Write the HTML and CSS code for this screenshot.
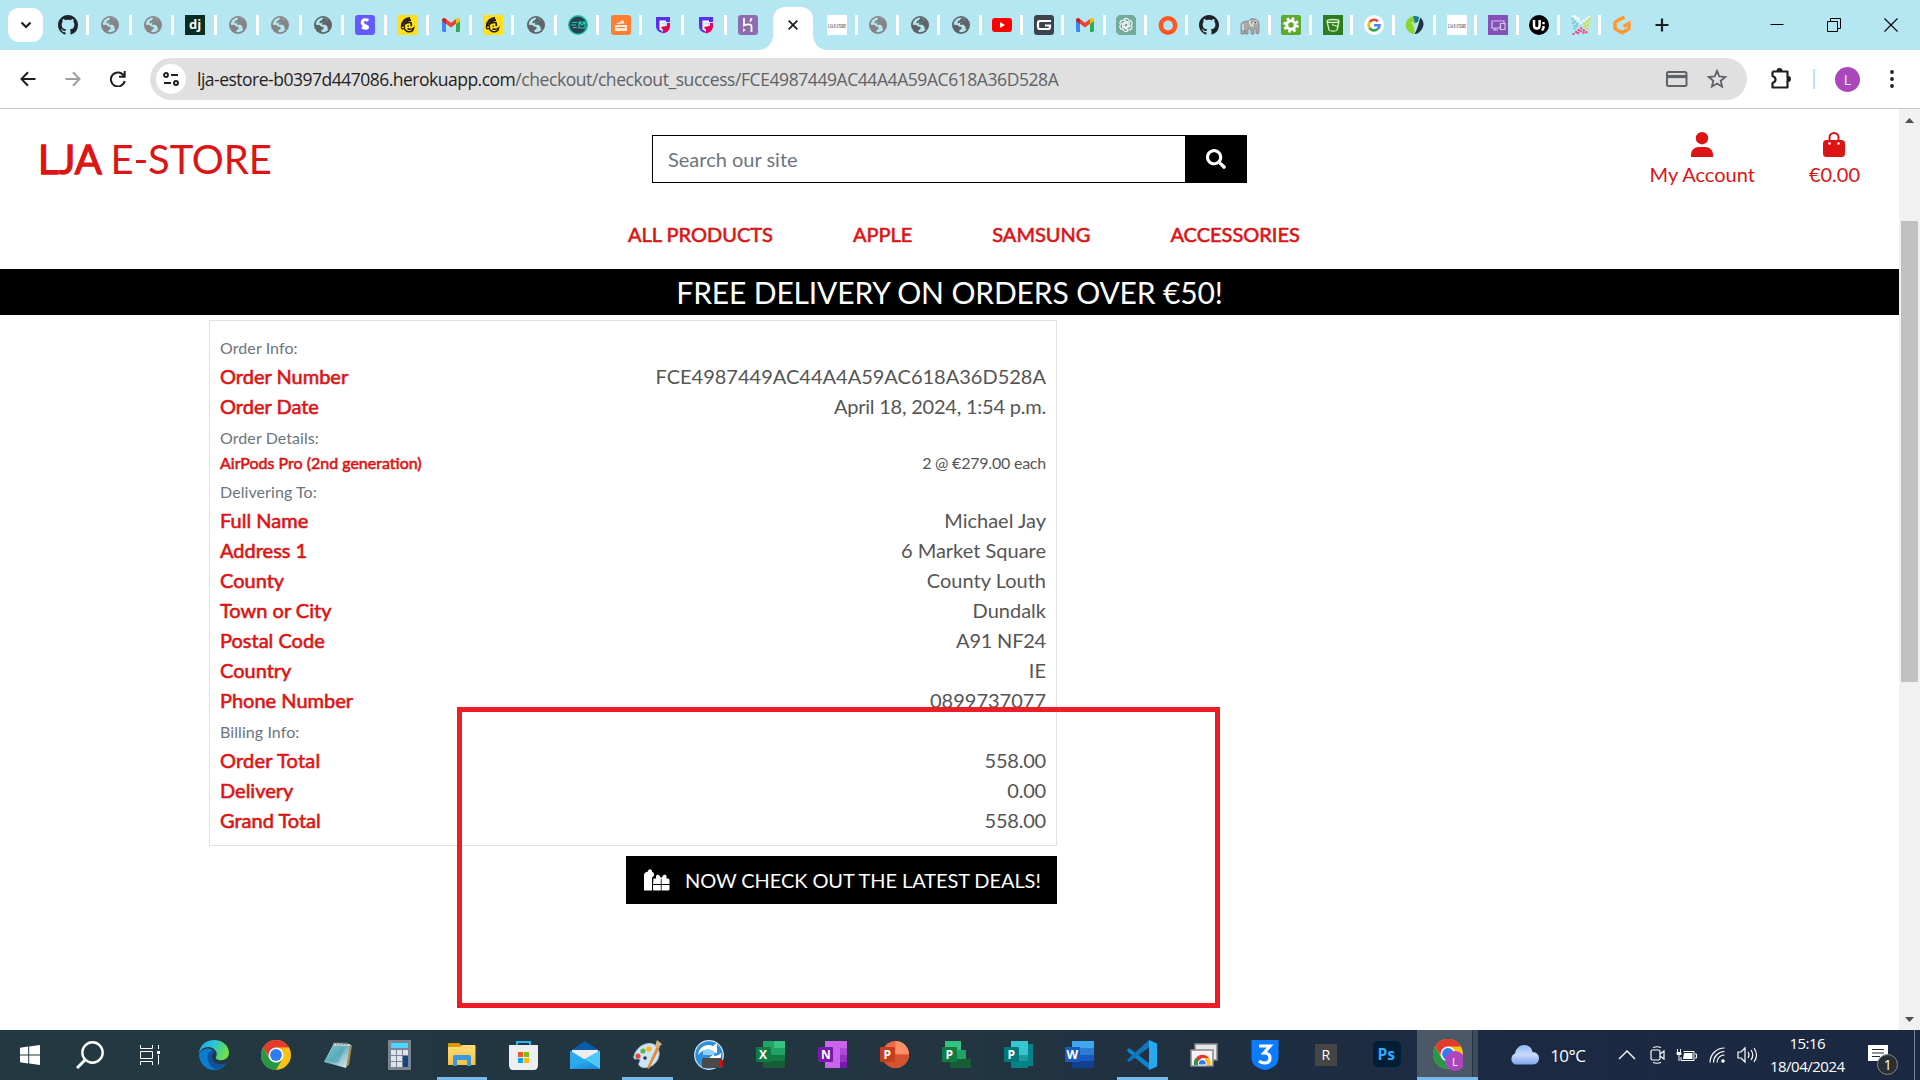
FILE: index.html
```html
<!DOCTYPE html>
<html lang="en">
<head>
<meta charset="utf-8">
<title>LJA E-Store</title>
<link rel="stylesheet" href="styles.css">
</head>
<body>
<svg class="defs" width="0" height="0">
  <defs>
    <linearGradient id="edge-g" x1="0" y1="0" x2="1" y2=".3"><stop offset="0" stop-color="#1fa2e8"/><stop offset=".5" stop-color="#2bc3d8"/><stop offset="1" stop-color="#6be04a"/></linearGradient>
    <linearGradient id="mail-g" x1="0" y1="0" x2="1" y2="1"><stop offset="0" stop-color="#35b8f5"/><stop offset="1" stop-color="#1583d8"/></linearGradient>
    <linearGradient id="cloud-g" x1="0" y1="0" x2="0" y2="1"><stop offset="0" stop-color="#8db8f5"/><stop offset=".5" stop-color="#c7dafa"/><stop offset="1" stop-color="#7fa6ee"/></linearGradient>
    <linearGradient id="note-g" x1="0" y1="0" x2="1" y2="1"><stop offset="0" stop-color="#e8f6f8"/><stop offset=".5" stop-color="#6fb5c3"/><stop offset="1" stop-color="#e8f3f4"/></linearGradient>
    <linearGradient id="folder-g" x1="0" y1="0" x2="0" y2="1"><stop offset="0" stop-color="#ffdc7c"/><stop offset="1" stop-color="#f6c142"/></linearGradient>
  </defs>
  <symbol id="globe" viewBox="0 0 20 20"><circle cx="10" cy="10" r="9" fill="currentColor"/><path d="M9 2.800C5.500 3.300 2.900 6.200 2.800 9.800l3.700.1 2 1.900h2v2.400l-2 .9v1.900c2.600.5 5.400-.5 7.200-2.800l-1.100-.2-.2-2.400-2-1.900H9l-.2-2 2.700-.3.700-1.600 2.500-.3.300-.9C13.400 3.200 11.200 2.500 9 2.800z" fill="#b4e7f2"/><path d="M10.500 2.700 8.800 5.200l-2 .8-.3 2.500 2.800-.9 2.200.1.700-1.800 2.500-.5.700-.8z" fill="currentColor"/></symbol>
  <symbol id="github" viewBox="0 0 16 16"><path fill="#1f2328" d="M8 0C3.580 0 0 3.580 0 8c0 3.540 2.290 6.530 5.470 7.590.4.070.55-.17.550-.38 0-.19-.01-.82-.01-1.490-2.010.37-2.530-.49-2.690-.94-.09-.23-.48-.94-.82-1.130-.28-.15-.68-.52-.01-.53.630-.01 1.080.58 1.230.82.720 1.210 1.870.87 2.330.66.070-.52.280-.87.510-1.070-1.780-.2-3.640-.89-3.640-3.950 0-.87.310-1.590.82-2.150-.08-.2-.36-1.020.080-2.120 0 0 .67-.21 2.200.82.640-.18 1.320-.27 2-.27s1.360.09 2 .27c1.530-1.040 2.200-.82 2.200-.82.440 1.100.160 1.920.080 2.120.51.560.82 1.270.82 2.150 0 3.070-1.870 3.750-3.650 3.950.29.250.54.730.54 1.480 0 1.070-.01 1.930-.01 2.200 0 .21.150.46.55.38A8.010 8.010 0 0 0 16 8c0-4.420-3.580-8-8-8z"/></symbol>
  <symbol id="gmail" viewBox="0 0 20 20"><path fill="#4285f4" d="M1 5.500v10.300c0 .7.500 1.200 1.200 1.200H5V8.500z"/><path fill="#34a853" d="M15 8.500V17h2.800c.7 0 1.200-.5 1.200-1.200V5.500z"/><path fill="#ea4335" d="M5 8.800V3.900l5 3.800 5-3.800v4.900l-5 3.800z"/><path fill="#c5221f" d="M1 5v1l4 3V3.900l-.9-.6C2.800 2.400 1 3.300 1 5z"/><path fill="#fbbc04" d="M15 3.900V9l4-3V5c0-1.700-1.800-2.600-3.100-1.700z"/></symbol>
  <symbol id="chimp" viewBox="0 0 20 20"><rect width="20" height="20" fill="#ffe01b"/><g fill="none" stroke="#241c15"><path d="M4 11.500C4 6.500 8 3 12 3.200" stroke-width="2.400"/><path d="M6 10.500C7 7.500 9.500 5 13 5" stroke-width="2"/><path d="M8 8.500c1.500-1.200 3-1.500 5-.8l.5 3" stroke-width="1.600"/><circle cx="5" cy="12.300" r="1.600" stroke-width="1.300"/><path d="M6.500 13.800c1 3 5 4.200 8.300 1.500l.7-2.300c-2 1.500-4 1.700-6 .8" stroke-width="1.500"/></g><path d="M9.500 10.500h1.500v1.200H9.500zM12.500 10h1.400v1.300h-1.400z" fill="#241c15"/></symbol>
  <symbol id="lja" viewBox="0 0 20 20"><rect width="20" height="20" fill="#fff"/><text x="1" y="12.500" font-family="Liberation Serif, serif" font-size="7" textLength="18" lengthAdjust="spacingAndGlyphs" fill="#111">LJA E-STORE</text></symbol>
  <symbol id="figma" viewBox="0 0 20 20"><path fill="#5a2ff0" d="M3 2h14v5H8v8.500l3 2.500C6 18 3 15 3 11z"/><path fill="#e6005c" d="M17 2v9c0 4-2.500 6.500-7 7.500V14H8v-3h6V8h3z"/><path d="M7.500 15V6.500h5.500M8 10.500h4" stroke="#fff" stroke-width="2" fill="none"/></symbol>
  <symbol id="chrome" viewBox="0 0 30 30"><circle cx="15" cy="15" r="15" fill="#fbc116"/><path fill="#e33b2e" d="M2 7.500A15 15 0 0 1 28 7.500H15L9 18.500z"/><path fill="#279847" d="M2 7.500A15 15 0 0 0 15 30l6.500-11.300L15 22.500l-6.500-3.800z"/><circle cx="15" cy="15" r="7.500" fill="#fff"/><circle cx="15" cy="15" r="5.900" fill="#2f7bf0"/></symbol>
</svg>

<div class="screen">
  <div class="tabstrip">
    <button class="tab-search"><svg width="12" height="8" viewBox="0 0 12 8"><path d="m1.500 1.500 4.500 4.500 4.500-4.500" fill="none" stroke="#1f1f1f" stroke-width="2.200"/></svg></button>
    <div class="tabs tabs-left">
      <span class="tab"><svg><use href="#github"/></svg></span>
      <span class="tab light"><svg><use href="#globe"/></svg></span>
      <span class="tab light"><svg><use href="#globe"/></svg></span>
      <span class="tab"><svg viewBox="0 0 20 20"><rect width="20" height="20" fill="#092e20"/><text x="4" y="14" class="glyph" font-size="13">dj</text></svg></span>
      <span class="tab light"><svg><use href="#globe"/></svg></span>
      <span class="tab light"><svg><use href="#globe"/></svg></span>
      <span class="tab dark"><svg><use href="#globe"/></svg></span>
      <span class="tab"><svg viewBox="0 0 20 20"><rect width="20" height="20" rx="3" fill="#635bff"/><path d="M13.500 5.200C9.500 3.800 7.200 5.200 7.200 7.600c0 3.400 5.300 2.700 5.300 4.500 0 1.500-2.600 1.500-5.600.1" fill="none" stroke="#fff" stroke-width="3"/></svg></span>
      <span class="tab"><svg><use href="#chimp"/></svg></span>
      <span class="tab"><svg><use href="#gmail"/></svg></span>
      <span class="tab"><svg><use href="#chimp"/></svg></span>
      <span class="tab dark"><svg><use href="#globe"/></svg></span>
      <span class="tab"><svg viewBox="0 0 20 20"><circle cx="10" cy="10" r="9.300" fill="#2c3e57" stroke="#16c79a" stroke-width="1.400"/><path d="M4 7.500h5M3 10h5M5 12.500h4M11 7h6v6h-6zl3 3 3-3" fill="none" stroke="#1fd4a4" stroke-width="1.200"/></svg></span>
      <span class="tab"><svg viewBox="0 0 20 20"><rect width="20" height="20" rx="3" fill="#ff7f32"/><path d="M4 10h12v6H4zM5 9l7-4 1.500 3.500z" fill="#ffe9da"/><path d="M6 12.500h8" stroke="#ff7f32"/></svg></span>
      <span class="tab"><svg><use href="#figma"/></svg></span>
      <span class="tab"><svg><use href="#figma"/></svg></span>
      <span class="tab last"><svg viewBox="0 0 20 20"><rect width="20" height="20" rx="3" fill="#8f6bb0"/><path d="M6 3v7.500c3-1.500 7.500-2 7.500 1V17M13.500 3c0 1.500-.5 2.500-1.500 3.500" fill="none" stroke="#fff" stroke-width="1.800"/><path d="m5.200 13 2.300 2-2.300 2z" fill="#fff"/></svg></span>
    </div>
    <div class="tab-active"><svg width="10" height="10" viewBox="0 0 10 10"><path d="m.7.7 8.600 8.600M9.300.7.700 9.300" stroke="#1f1f1f" stroke-width="1.800"/></svg></div>
    <div class="tabs tabs-right">
      <span class="tab"><svg><use href="#lja"/></svg></span>
      <span class="tab light"><svg><use href="#globe"/></svg></span>
      <span class="tab dark"><svg><use href="#globe"/></svg></span>
      <span class="tab dark"><svg><use href="#globe"/></svg></span>
      <span class="tab"><svg viewBox="0 0 20 20"><rect y="3" width="20" height="14" rx="3" fill="#f00"/><path d="M8 7v6l5-3z" fill="#fff"/></svg></span>
      <span class="tab"><svg viewBox="0 0 20 20"><rect width="20" height="20" rx="3" fill="#3b434d"/><path d="M17 6H6Q4 6 4 8v4q0 2 2 2h8q2 0 2-2v-1.500h-5" fill="none" stroke="#fff" stroke-width="2.200"/></svg></span>
      <span class="tab"><svg><use href="#gmail"/></svg></span>
      <span class="tab"><svg viewBox="0 0 20 20"><path d="M3 0h14l3 3v17H3l-3-3V3z" fill="#74aa9c"/><g fill="none" stroke="#fff" stroke-width="1.100"><path id="petal" d="M8 4.200c2-1.600 5-.5 5.200 2v4.200L10 12.300"/><use href="#petal" transform="rotate(60 10 10)"/><use href="#petal" transform="rotate(120 10 10)"/><use href="#petal" transform="rotate(180 10 10)"/><use href="#petal" transform="rotate(240 10 10)"/><use href="#petal" transform="rotate(300 10 10)"/></g></svg></span>
      <span class="tab"><svg viewBox="0 0 20 20"><circle cx="10" cy="10.500" r="7.200" fill="none" stroke="#ff5722" stroke-width="4.400"/></svg></span>
      <span class="tab"><svg><use href="#github"/></svg></span>
      <span class="tab"><svg viewBox="0 0 20 20"><path d="M1 19V10c0-3 3-4 8-4 0-2 3-3 5-2 4 0 5 3 5 6v8c-1 1.500-2.500 1-3 0v-5l-2 1v5h-3v-5H8v5H5v-4l-1 4z" fill="#aaa" stroke="#777" stroke-width=".7"/><path d="M10 5c-1 3 0 5 2 6l2-4M3 9v6M16 5v4" fill="none" stroke="#eee" stroke-width="1.200"/><circle cx="15.500" cy="7.500" r=".8" fill="#333"/></svg></span>
      <span class="tab"><svg viewBox="0 0 20 20"><rect width="20" height="20" rx="2" fill="#5fa92f"/><circle cx="10" cy="10" r="6.500" fill="none" stroke="#fff" stroke-width="2.600" stroke-dasharray="2.550"/><circle cx="10" cy="10" r="4.300" fill="none" stroke="#fff" stroke-width="3"/></svg></span>
      <span class="tab"><svg viewBox="0 0 20 20"><rect width="20" height="20" fill="#2e7d1e"/><path d="M4 6c0-2 12-2 12 0s-12 2-12 0l2 9c1 1.500 7 1.500 8 0l2-9M9 9.500l7 2.500" fill="none" stroke="#d8f0c8" stroke-width="1.300"/></svg></span>
      <span class="tab"><svg viewBox="0 0 20 20"><circle cx="10" cy="10" r="10" fill="#fff"/><g fill="none" stroke-width="2.600"><path d="M5.700 6.900a5.400 5.400 0 0 1 8.200-.6" stroke="#ea4335"/><path d="M5.500 13a5.600 5.600 0 0 1 .2-6.100" stroke="#fbbc04"/><path d="M13.800 13.900A5.500 5.500 0 0 1 5.500 13" stroke="#34a853"/><path d="M10 10.200h5.500c0 1.500-.6 2.900-1.700 3.700" stroke="#4285f4"/></g></svg></span>
      <span class="tab"><svg viewBox="0 0 20 20"><path d="M8 1.200A9 9 0 0 0 9 19c1-3 1-7-3-12 2 0 4 2 5 4z" fill="#8bd62b"/><path d="M15 2.600c4 2.500 5.500 9-.5 14.400-1.500 1.500-3 2-5 2 2-3 4-8 5.500-16.400z" fill="#1f3340"/><path d="M8 1.200c2-.5 4-.2 6 .8l-1 5-3 1z" fill="#197a8c"/></svg></span>
      <span class="tab"><svg><use href="#lja"/></svg></span>
      <span class="tab"><svg viewBox="0 0 20 20"><rect width="20" height="20" fill="#8550b8"/><path d="M4 13V6h12v2M3 13h9v-2M12.500 8.500h4.500v6h-4.500zM5 15h5M7 13v2" fill="none" stroke="#d8c4ee" stroke-width="1.200"/></svg></span>
      <span class="tab"><svg viewBox="0 0 20 20"><circle cx="10" cy="10" r="10" fill="#000"/><path d="M5 5v5.500q0 3 2.800 3t2.800-3V5" fill="none" stroke="#fff" stroke-width="2.500"/><path d="M14.500 7v2.300M14.500 11v2l-1.500 2.500" fill="none" stroke="#fff" stroke-width="2.400"/></svg></span>
      <span class="tab"><svg viewBox="0 0 20 20" fill="none" stroke-linecap="round" stroke-width="2.400" stroke-dasharray="0 3.300"><path d="m2 1.500 8 6 8-6M4.500 1.500l5.500 3" stroke="#fff"/><path d="m1.500 4 5.500 6-5.500 6M2 8l2 4" stroke="#7ccbc8"/><path d="m18.500 4-5.500 6 5.500 6M17 7v5" stroke="#d8e021"/><path d="m2.500 19 7.500-6 7.500 6M7 18l3-2 3 2" stroke="#ed4b82"/></svg></span>
      <span class="tab last"><svg viewBox="0 0 20 20"><path d="M12.500 2 4.200 6.300Q3 7 3 8.500v4q0 1.300 1.200 2l4.600 2.600q1.200.7 2.400 0l4.600-2.600q1.200-.7 1.200-2V8.500l-5.500 3" fill="none" stroke="#ff9a33" stroke-width="3.600"/></svg></span>
    </div>
    <svg class="plus" width="14" height="14" viewBox="0 0 14 14"><path d="M7 .5v13M.5 7h13" stroke="#1f1f1f" stroke-width="2.200"/></svg>
    <div class="window-controls">
      <svg width="14" height="14" viewBox="0 0 14 14"><path d="M.5 6.500h13" stroke="#000"/></svg>
      <svg width="14" height="14" viewBox="0 0 14 14"><path d="M.5 3.500h10v10H.5zM3.500 3V.5h10v10H11" fill="none" stroke="#000"/></svg>
      <svg width="14" height="14" viewBox="0 0 14 14"><path d="m.5.5 13 13M13.500.5.500 13.500" stroke="#000" stroke-width="1.100"/></svg>
    </div>
  </div>

  <div class="toolbar">
    <div class="nav-buttons">
      <svg width="16" height="16" viewBox="0 0 16 16"><path d="M15.500 8H2M8 1.300 1.500 8 8 14.700" fill="none" stroke="#1f1f1f" stroke-width="2"/></svg>
      <svg width="16" height="16" viewBox="0 0 16 16"><path d="M.5 8H14M8 1.300 14.500 8 8 14.700" fill="none" stroke="#9e9e9e" stroke-width="2"/></svg>
      <svg width="16" height="16" viewBox="0 0 16 16"><path d="M14 5A7 7 0 1 0 14.700 10M14.700 0v5.700H9" fill="none" stroke="#1f1f1f" stroke-width="2"/></svg>
    </div>
    <div class="address">
      <span class="site-info"><svg width="16" height="14" viewBox="0 0 16 14" fill="none" stroke="#1f1f1f" stroke-width="1.900"><circle cx="3" cy="3" r="2"/><path d="M8 3h7M1 11h7"/><circle cx="13" cy="11" r="2"/></svg></span>
      <span class="url"><span class="url-host">lja-estore-b0397d447086.herokuapp.com</span><span class="url-path">/checkout/checkout_success/FCE4987449AC44A4A59AC618A36D528A</span></span>
      <svg class="card-icon" width="22" height="16" viewBox="0 0 22 16"><rect x="1" y="1" width="19.500" height="14" rx="1.500" fill="none" stroke="#5f6368" stroke-width="2"/><path d="M1 5.500h20" stroke="#5f6368" stroke-width="3.200"/></svg>
      <svg class="star-icon" width="20" height="20" viewBox="0 0 20 20"><path d="m10 1.800 2.300 5.600 6 .5-4.600 3.900 1.400 5.900-5.100-3.100-5.100 3.100 1.400-5.900L1.700 7.900l6-.5z" fill="none" stroke="#5f6368" stroke-width="1.800"/></svg>
    </div>
    <svg class="puzzle" width="22" height="22" viewBox="0 0 22 22"><path d="M2.500 3.500h15v5.500M17.500 13v6.500h-15v-4.500q3-1 3-3.500t-3-3.500V3.500" fill="none" stroke="#1f1f1f" stroke-width="2.200" stroke-linejoin="round"/><path d="M6.500 3a3 3 0 0 1 6 0zM18 8a3 3 0 0 1 0 6z" fill="#1f1f1f"/><path d="M17.500 8.500v5" stroke="#1f1f1f" stroke-width="2"/></svg>
    <span class="divider"></span>
    <span class="avatar">L</span>
    <svg class="kebab" width="4" height="18" viewBox="0 0 4 18" fill="#1f1f1f"><circle cx="2" cy="2" r="1.900"/><circle cx="2" cy="9" r="1.900"/><circle cx="2" cy="16" r="1.900"/></svg>
  </div>

  <div class="viewport">
    <main class="page">
      <header class="header">
        <a class="logo"><b>LJA</b> E-STORE</a>
        <form class="search">
          <span class="search-input">Search our site</span>
          <span class="search-btn"><svg width="20" height="20" viewBox="0 0 512 512"><path fill="#fff" d="M505 442.700 405.300 343c-4.500-4.500-10.600-7-17-7H372c27.600-35.300 44-79.700 44-128C416 93.100 322.900 0 208 0S0 93.100 0 208s93.100 208 208 208c48.300 0 92.700-16.400 128-44v16.300c0 6.400 2.500 12.500 7 17l99.700 99.700c9.400 9.400 24.600 9.400 33.900 0l28.300-28.300c9.400-9.400 9.400-24.600.1-34zM208 336c-70.700 0-128-57.200-128-128 0-70.700 57.200-128 128-128 70.700 0 128 57.200 128 128 0 70.700-57.200 128-128 128z"/></svg></span>
        </form>
        <div class="account">
          <a class="account-link"><svg width="22" height="25" viewBox="0 0 22 25" fill="#dc1414"><circle cx="11" cy="6.200" r="6.200"/><path d="M0 25v-2c0-5 3.500-8 8-8h6c4.500 0 8 3 8 8v2z"/></svg><span>My Account</span></a>
          <a class="account-link"><svg width="22" height="25" viewBox="0 0 22 25"><path d="M6.500 9V5.500a4.500 4.500 0 0 1 9 0V9" fill="none" stroke="#dc1414" stroke-width="2"/><rect y="8" width="22" height="17" rx="3.500" fill="#dc1414"/><circle cx="6.500" cy="11.500" r="1.300" fill="#fff"/><circle cx="15.500" cy="11.500" r="1.300" fill="#fff"/></svg><span>€0.00</span></a>
        </div>
      </header>
      <nav class="nav"><a>ALL PRODUCTS</a><a>APPLE</a><a>SAMSUNG</a><a>ACCESSORIES</a></nav>
      <div class="banner">FREE DELIVERY ON ORDERS OVER €50!</div>
      <section class="order">
        <div class="card">
          <div class="row"><small>Order Info:</small></div>
          <div class="row"><b>Order Number</b><span>FCE4987449AC44A4A59AC618A36D528A</span></div>
          <div class="row"><b>Order Date</b><span class="tight">April 18, 2024, 1:54 p.m.</span></div>
          <div class="row"><small>Order Details:</small></div>
          <div class="row item"><b>AirPods Pro (2nd generation)</b><span class="tight">2 @ €279.00 each</span></div>
          <div class="row"><small>Delivering To:</small></div>
          <div class="row"><b>Full Name</b><span>Michael Jay</span></div>
          <div class="row"><b>Address 1</b><span>6 Market Square</span></div>
          <div class="row"><b>County</b><span>County Louth</span></div>
          <div class="row"><b>Town or City</b><span>Dundalk</span></div>
          <div class="row"><b>Postal Code</b><span class="tight">A91 NF24</span></div>
          <div class="row"><b>Country</b><span>IE</span></div>
          <div class="row"><b>Phone Number</b><span>0899737077</span></div>
          <div class="row"><small>Billing Info:</small></div>
          <div class="row"><b class="wide">Order Total</b><span class="tight">558.00</span></div>
          <div class="row"><b>Delivery</b><span class="tight">0.00</span></div>
          <div class="row"><b>Grand Total</b><span class="tight">558.00</span></div>
        </div>
        <a class="deals"><svg width="26" height="22" viewBox="0 0 26 22"><path d="M0 21V6q0-2.500 2.500-3L4 2.500V1.500L6 0l2 1.500v1.200l1.500 1q1 1 .5 3L8 8.500v13H1q-1 0-1-.5z" fill="#fff"/><path d="M9.500 9.500h2.500V7.500c0-2 3-2.500 4 0l1.200 1.500 1.300-1.500c1-2.500 4-2 4 0v2h1.500q1.500 0 1.500 1.500v4H17.600V10h-.8v5H9zM9 16h7.800v5.500H10q-1 0-1-1.500zm8.600 0h7.900v4q0 1.500-1.500 1.500h-6.400z" fill="#fff"/></svg><span>NOW CHECK OUT THE LATEST DEALS!</span></a>
      </section>
    </main>
    <div class="scrollbar">
      <svg width="9" height="5" viewBox="0 0 9 5"><path d="M0 5 4.500 0 9 5z" fill="#505050"/></svg>
      <span class="thumb"></span>
      <svg width="9" height="5" viewBox="0 0 9 5"><path d="m0 0 4.500 5L9 0z" fill="#505050"/></svg>
    </div>
    <div class="highlight"></div>
  </div>

  <footer class="taskbar">
    <div class="system">
      <span><svg width="20" height="20" viewBox="0 0 20 20" fill="#fff"><path d="M0 2.700 8.200 1.500v8H0zM9.200 1.400 20 0v9.500H9.200zM0 10.500h8.200v8L0 17.300zM9.200 10.500H20V20L9.200 18.600z"/></svg></span>
      <span><svg width="28" height="28" viewBox="0 0 28 28" fill="none" stroke="#fff"><circle cx="16.500" cy="11.500" r="10.200" stroke-width="2.400"/><path d="M9 19 1 27" stroke-width="3"/></svg></span>
      <span><svg width="20" height="20" viewBox="0 0 20 20" fill="none" stroke="#fff"><path d="M.5 0v3.500h12V0M.5 20v-3.500h12V20M.5 6.500h12v7H.5zM18.500 0v4M18.500 10v9.500"/><path d="M17 7.500h3" stroke-width="3"/></svg></span>
    </div>
    <div class="apps">
      <span class="app"><svg width="30" height="30" viewBox="0 0 30 30"><path d="M0 14C0 22 6 30 15 30c5 0 9-2 12-6-6 2-14 0-14-7 0-3 1-4 2-5C11 6 3 8 0 14z" fill="#0b7dd0"/><path d="M0 13C1 5 7 0 15 0c9 0 15 6 15 13 0 5-5 8-10 7-3-.5-4-2-2.500-4C19 12 15 7 9 7c-4 0-7 2-9 6z" fill="url(#edge-g)"/><path d="M9 14c-2 7 3 15 9 15 5-1 8-4 9.500-6-6 3-14 0-14.500-5-.5-3 .5-5 2.500-6-3-2-5.500-1-6.500 2z" fill="#10509d"/></svg></span>
      <span class="app"><svg width="30" height="30"><use href="#chrome"/></svg></span>
      <span class="app"><svg width="28" height="28" viewBox="0 0 28 28"><path d="m23 3 5 1-3 20-3 2z" fill="#b08a4a"/><path d="m10 2 16 1-4 24L0 21z" fill="url(#note-g)"/><path d="m10 2 16 1v2L9 4z" fill="#c9d5d8"/><path d="m9 5-8 15 13 2 8-17z" fill="#4fa3b5" opacity=".6"/><path d="M10 1v3m3-3v3m3-3v3m3-3v3m3-3v3" stroke="#777"/></svg></span>
      <span class="app"><svg width="23" height="30" viewBox="0 0 23 30"><rect width="23" height="30" rx="1" fill="#7c8692"/><path d="M3 3h17v5H3z" fill="#4cd6fb"/><path d="M3 10h5v5H3zM9 10h5v5H9zM15 10h5v5h-5zM3 16h5v5H3zM9 16h5v5H9zM3 22h5v5H3zM9 22h5v5H9z" fill="#dfe4ea"/><path d="M15 16h5v11h-5z" fill="#124488"/></svg></span>
      <span class="app running"><svg width="28" height="24" viewBox="0 0 28 24"><path d="M0 1q0-1 1-1h10l2 2v6H0z" fill="#d99a05"/><path d="M0 4h12l2-2h12.500q1 0 1 1v19H0z" fill="url(#folder-g)"/><path d="M5 23V14q0-2 2-2h14q2 0 2 2v9h-4v-6H9v6z" fill="#3a96dd"/></svg></span>
      <span class="app"><svg width="29" height="29" viewBox="0 0 29 29"><path d="M8 5V1h13v4" fill="none" stroke="#29b6f0" stroke-width="2"/><path d="M0 4h29v20q0 5-4 5H4q-4 0-4-5z" fill="#eceeef"/><path d="M9 11h5v5H9z" fill="#f35325"/><path d="M15 11h5v5h-5z" fill="#81bc06"/><path d="M9 17h5v5H9z" fill="#05a6f0"/><path d="M15 17h5v5h-5z" fill="#ffba08"/></svg></span>
      <span class="app"><svg width="30" height="28" viewBox="0 0 30 28"><path d="M0 10 15 0l15 10z" fill="#0b5aab"/><path d="M2 9h26v9H2z" fill="#eee"/><path d="M0 9.500 30 28H0z" fill="#2ba8ee"/><path d="M30 9.500V28L14 18.300z" fill="#4cc8fa"/><path d="M30 28H0l15-9.300z" fill="url(#mail-g)"/></svg></span>
      <span class="app running"><svg width="30" height="30" viewBox="0 0 30 30"><path d="M2 16C5 6 14 2 21 4c7 3 8 12 3 18-5 7-15 7-17 3-1-3 3-4 0-6-2-1-6 2-5-3z" fill="#cfe4f2" stroke="#9cc0d8"/><circle cx="6" cy="16" r="2.600" fill="#e2493c"/><circle cx="11" cy="11" r="2.600" fill="#5fb848"/><circle cx="17" cy="9" r="2.800" fill="#f6b62c"/><circle cx="13" cy="18" r="1.800" fill="#273c48"/><path d="m15 28 10-22 3 1-11 22z" fill="#e6892d"/><path d="m23 6 2-6 5 4-4 4z" fill="#d8b17a"/></svg></span>
      <span class="app"><svg width="30" height="30" viewBox="0 0 30 30"><circle cx="15" cy="15" r="14.300" fill="#2f8fdc" stroke="#cfe6f8" stroke-width="1.200"/><path d="M4 15C5 7 12 3 19 6l4-3v10l-9-1 2-2c-5-1-9 1-12 5z" fill="#fff"/><path d="M9 11c4-3 8-2 12 1l-1 3H9z" fill="#8fd0f7"/><path d="M27 13c1 5-2 8-6 9l-6-4 5-4v2c3 0 5-1 7-3z" fill="#fff"/><path d="M8 20q0-2 2-2h18v10H10q-2 0-2-2z" fill="#4a4a4a"/><path d="M25 20h4v7h-4z" fill="#c80f16"/></svg></span>
      <span class="app"><svg width="30" height="28" viewBox="0 0 30 28"><path d="M7 0h22v27H7z" fill="#21a366"/><path d="M18 0h11v7H18z" fill="#33c481"/><path d="M7 14h22v13H7z" fill="#107c41"/><path d="M7 20h22v7H7z" fill="#185c37"/><rect y="6" width="15" height="15" rx="1" fill="#107c41"/><text x="3" y="18" class="glyph" font-size="12">X</text></svg></span>
      <span class="app"><svg width="30" height="28" viewBox="0 0 30 28"><path d="M7 0h22v27H7z" fill="#ca64ea"/><path d="M22 7h7v7h-7z" fill="#ae4bd5"/><path d="M22 14h7v7h-7z" fill="#9332bf"/><path d="M22 21h7v6h-7z" fill="#7719aa"/><rect y="6" width="15" height="15" rx="1" fill="#7719aa"/><text x="3" y="18" class="glyph" font-size="12">N</text></svg></span>
      <span class="app"><svg width="30" height="28" viewBox="0 0 30 28"><circle cx="15.500" cy="13.500" r="13.500" fill="#ed6c47"/><path d="M15.500 0A13.500 13.500 0 0 1 29 13.500H15.500z" fill="#ff8f6b"/><path d="M2 13.500h27a13.500 13.500 0 0 1-27 0z" fill="#d35230"/><rect y="6" width="15" height="15" rx="1" fill="#c43e1c"/><text x="3.500" y="18" class="glyph" font-size="12">P</text></svg></span>
      <span class="app"><svg width="30" height="28" viewBox="0 0 30 28"><path d="M3 0h16v9H3z" fill="#33c481"/><path d="M3 9h21v9H3z" fill="#21a366"/><path d="M8 18h21v9H8z" fill="#185c37"/><rect y="6" width="15" height="15" rx="1" fill="#107c41"/><text x="3.500" y="18" class="glyph" font-size="12">P</text></svg></span>
      <span class="app"><svg width="30" height="28" viewBox="0 0 30 28"><path d="M12 3h17v22H12z" fill="#038387"/><path d="M7 0h17v27H7z" fill="#1a9ba1"/><path d="M7 0h17v14H7z" fill="#37c6d0"/><path d="M7 20h17v7H7z" fill="#038387"/><rect y="6" width="15" height="15" rx="1" fill="#03787c"/><text x="3.500" y="18" class="glyph" font-size="12">P</text></svg></span>
      <span class="app"><svg width="30" height="28" viewBox="0 0 30 28"><path d="M7 0h22v27H7z" fill="#2b7cd3"/><path d="M7 0h22v7H7z" fill="#41a5ee"/><path d="M7 14h22v13H7z" fill="#185abd"/><path d="M7 20h22v7H7z" fill="#103f91"/><rect y="6" width="15" height="15" rx="1" fill="#185abd"/><text x="1.500" y="18" class="glyph" font-size="12">W</text></svg></span>
      <span class="app running"><svg width="30" height="30" viewBox="0 0 30 30"><path d="M0 10l2-2 21 16v6L1 12z" fill="#0a86d1"/><path d="M0 20 22 0l2 6L2 22z" fill="#0f76bc"/><path d="M22 0 30 3.500v23L22 30V0z" fill="#26a8f2"/></svg></span>
      <span class="app late"><svg width="28" height="24" viewBox="0 0 28 24"><path d="M5 1h22v16H5z" fill="#e8e8e8" stroke="#888" stroke-width="1.500"/><path d="M1 7h22v16H1z" fill="#f3f3f3" stroke="#888" stroke-width="1.500"/><path d="M4 22a8 8 0 0 1 2-7 8 8 0 0 1 13 0h-7z" fill="#e33b2e"/><path d="M4 22c-.500-3 .500-5 2-7l4 7z" fill="#279847"/><path d="M19 15c1.500 2 2 4 1.500 7H15V15z" fill="#fbc116"/><path d="M8.500 22a4 4 0 1 1 7.500 0z" fill="#2f7bf0" stroke="#fff"/></svg></span>
      <span class="app late"><svg width="28" height="30" viewBox="0 0 28 30"><path d="M.5 0h27v17q0 8-7 11-4 2-6.500 2t-6.500-2q-7-3-7-11z" fill="#0b7bff"/><path d="M8 6h11l-6 7q6 0 6 5t-5.500 5q-3 0-5.500-2" fill="none" stroke="#fff" stroke-width="3.200"/></svg></span>
      <span class="app late"><svg width="22" height="22" viewBox="0 0 22 22"><rect width="22" height="22" fill="#454545"/><text x="6.500" y="16" font-family="Open Sans, sans-serif" font-size="14" fill="#fff">R</text></svg></span>
      <span class="app late"><svg width="28" height="28" viewBox="0 0 28 28"><rect width="28" height="26" rx="5" fill="#001e36"/><text x="4.500" y="18.500" font-family="Open Sans, sans-serif" font-weight="700" font-size="15.500" fill="#31a8ff">Ps</text></svg></span>
      <span class="app late running current"><svg width="30" height="32" viewBox="0 0 30 32"><use href="#chrome" width="30" height="30"/><circle cx="22" cy="22" r="10" fill="#ab47bc"/><text x="19" y="26.500" font-family="Open Sans, sans-serif" font-size="11" fill="#fff">L</text></svg></span>
    </div>
    <div class="tray">
      <svg class="weather" width="30" height="20" viewBox="0 0 30 20"><path d="M6 19.500a6 6 0 0 1 0-11C7 3 11 0 15 0c5 0 8 3 8.500 7 4 0 6.500 3 6.500 6s-2 6.500-6 6.500z" fill="url(#cloud-g)"/></svg>
      <span class="temp">10°C</span>
      <svg class="chev" width="18" height="10" viewBox="0 0 18 10"><path d="m1 9 8-8 8 8" fill="none" stroke="#fff" stroke-width="1.400"/></svg>
      <svg class="cam" width="15" height="18" viewBox="0 0 15 18" fill="none" stroke="#fff" stroke-width="1.200"><rect x="1" y="4" width="9" height="10" rx="1.500"/><path d="m10 8 4-3v8l-4-3M3 1.500q4-1.500 8 0M3 16.500q4 1.500 8 0"/></svg>
      <svg class="battery" width="21" height="13" viewBox="0 0 21 13"><path d="M7.500 2.500H18v9H5V8M19 5h1.500v4H19" fill="none" stroke="#fff"/><path d="M8 4h8.500v6H7z" fill="#fff"/><path d="M1.500 0v3M4.500 0v3M3 6v6M1 3.500h4v2H1z" fill="#fff" stroke="#fff"/></svg>
      <svg class="wifi" width="17" height="16" viewBox="0 0 17 16" fill="none" stroke="#fff" stroke-width="1.200"><path d="M1 15.500A14.500 14.500 0 0 1 15.500 1M4.500 15.500a11 11 0 0 1 11-11M8 15.500a7.500 7.500 0 0 1 7.500-7.500"/><circle cx="14" cy="14" r="1.200" fill="#fff"/></svg>
      <svg class="volume" width="21" height="18" viewBox="0 0 21 18" fill="none" stroke="#fff" stroke-width="1.200"><path d="M1 6h3l4-4v14l-4-4H1zM11 6q2 3 0 6M14 4q3.500 5 0 10M17 2q5 7 0 14"/></svg>
      <div class="clock"><span>15:16</span><span>18/04/2024</span></div>
      <div class="notify"><svg width="20" height="20" viewBox="0 0 20 20"><path d="M0 0h20v16h-5l-4 4v-4H0z" fill="#fff"/><path d="M4 4.500h12M4 8h12M4 11.500h8" stroke="#1c2942"/></svg><span class="badge">1</span></div>
      <span class="show-desktop"></span>
    </div>
  </footer>
</div>
</body>
</html>
```
FILE: styles.css
```css
* { box-sizing: border-box; }
body { margin: 0; overflow: hidden; font-family: Lato, sans-serif; }
svg { display: block; flex: none; }
.defs { position: absolute; }
.screen { width: 1920px; height: 1080px; display: flex; flex-direction: column; background: #fff; }

/* Browser tabs */
.tabstrip { height: 50px; flex: none; display: flex; align-items: center; background: #b4e7f2; padding-left: 8px; }
.tab-search { width: 35px; height: 34px; border: 0; border-radius: 11px; background: #fff; padding: 0; display: flex; align-items: center; justify-content: center; margin-right: 4px; flex: none; }
.tabs { display: flex; flex: none; }
.tab { height: 20px; display: flex; align-items: center; justify-content: center; border-right: 3px solid #fff; padding-left: 3px; }
.tabs .last { border-color: transparent; }
.tabs-left { margin-left: -0.500px; }
.tabs-left .tab { width: 42.540px; }
.tabs-right .tab { width: 41.300px; }
.tab svg { width: 20px; height: 20px; }
.light { color: #858585; }
.dark { color: #606469; }
.glyph { font-family: "Open Sans", sans-serif; font-weight: 700; fill: #fff; }
.tab-active { width: 40px; height: 43px; align-self: flex-end; margin: 0 4px 0 3px; background: #fff; border-radius: 12px 12px 0 0; display: flex; align-items: center; justify-content: center; padding-bottom: 7px; position: relative; flex: none; }
.tab-active::before, .tab-active::after { content: ""; position: absolute; bottom: 0; width: 14px; height: 14px; }
.tab-active::before { right: 100%; background: radial-gradient(circle at 0 0, transparent 13.500px, #fff 14px); }
.tab-active::after { left: 100%; background: radial-gradient(circle at 100% 0, transparent 13.500px, #fff 14px); }
.plus { margin-left: 13px; }
.window-controls { margin-left: auto; display: flex; gap: 43px; padding-right: 22px; }

/* Browser toolbar */
.toolbar { height: 59px; flex: none; display: flex; align-items: center; padding: 0 26px 0 20px; border-bottom: 1px solid #c6c6c6; background: linear-gradient(#fff, #fff); }
.nav-buttons { display: flex; gap: 29px; width: 130px; flex: none; }
.address { width: 1597px; height: 42px; flex: none; display: flex; align-items: center; border-radius: 21px; background: #e0e0e0; padding: 0 20px 0 6px; }
.site-info { width: 30px; height: 30px; border-radius: 50%; background: #fff; display: flex; align-items: center; justify-content: center; margin-right: 11px; flex: none; }
.url { font: 17.500px "Open Sans", sans-serif; flex: 1; white-space: nowrap; color: #5f6368; }
.url-host { color: #1f1f1f; letter-spacing: -0.500px; }
.url-path { letter-spacing: -0.430px; }
.card-icon { margin-right: 19px; }
.puzzle { margin-left: 23px; }
.divider { width: 2px; height: 20px; background: #b4e7f2; margin: 0 20px 0 21px; }
.avatar { width: 25px; height: 25px; border-radius: 50%; background: #ab47bc; color: #fff; font: 14px/25px "Open Sans", sans-serif; text-align: center; flex: none; }
.kebab { margin-left: auto; }

/* Web page */
.viewport { height: 921px; flex: none; display: flex; position: relative; color: #555; font-size: 20px; line-height: 30px; }
.page { width: 1899px; flex: none; }
.page b, .nav { font-weight: 400; color: #dc1414; -webkit-text-stroke: 0.600px #dc1414; }
.header { display: flex; height: 94px; padding: 22px 39px 0 38px; justify-content: space-between; align-items: flex-start; }
.logo { width: 614px; font-size: 40px; line-height: 56px; color: #dc1414; white-space: nowrap; letter-spacing: -0.150px; }
.logo b { -webkit-text-stroke-width: 1.300px; }
.search { display: flex; width: 595px; height: 48px; margin-top: 4px; border: 1px solid #000; flex: none; }
.search-input { flex: 1; padding: 8px 15px; color: #6c757d; }
.search-btn { width: 61px; background: #000; display: flex; align-items: center; justify-content: center; }
.account { width: 613px; display: flex; justify-content: flex-end; gap: 54px; padding-top: 1px; }
.account-link { display: flex; flex-direction: column; align-items: center; gap: 2px; color: #dc1414; white-space: nowrap; }
.nav { height: 66px; display: flex; gap: 80px; padding: 16px 0 0 628px; white-space: nowrap; }
.banner { height: 46px; background: #000; color: #fff; font-size: 30px; line-height: 46px; text-align: center; white-space: nowrap; letter-spacing: -0.140px; }
.order { width: 848px; margin: 5px 0 0 209px; display: flex; flex-direction: column; align-items: flex-end; }
.card { width: 848px; height: 526px; border: 1px solid #dee2e6; padding: 10px 10px 0; }
.row { height: 30px; display: flex; justify-content: space-between; align-items: center; white-space: nowrap; }
.row small { font-size: 16px; color: #6c757d; padding-top: 4px; letter-spacing: 0.080px; }
.item { height: 24px; font-size: 16px; }
.tight { letter-spacing: -0.220px; }
.wide { letter-spacing: 0.200px; }
.deals { width: 431px; height: 48px; margin-top: 10px; background: #000; color: #fff; display: flex; align-items: center; gap: 15px; padding-left: 18px; white-space: nowrap; letter-spacing: -0.080px; }
.scrollbar { width: 21px; background: #f1f1f1; display: flex; flex-direction: column; align-items: center; padding: 9px 0 8px; }
.thumb { width: 17px; height: 461px; background: #c1c1c1; margin: 98px 0 auto; }
/* Marker drawn over the page */
.highlight { position: absolute; left: 457px; top: 598px; width: 763px; height: 301px; border: 5px solid #ee1c25; }

/* Windows taskbar */
.taskbar { height: 50px; flex: none; display: flex; color: #fff; background: linear-gradient(90deg, #233941, #223541 50%, #1b2942 80%, #1b2842); }
.system { display: flex; width: 183px; flex: none; }
.system span { width: 60px; display: flex; align-items: center; justify-content: center; }
.apps { display: flex; flex: none; }
.app { width: 61.900px; display: flex; align-items: center; justify-content: center; position: relative; }
.late { width: 61px; }
.running::after { content: ""; position: absolute; left: 6px; right: 5px; bottom: 0; height: 3px; background: #76b9ed; }
.current { background: linear-gradient(90deg, #4a5868 55px, #253648 55px, #253648 56px, #3d4b5c 56px); }
.current::after { left: 0; right: 0; }
.tray { flex: 1; display: flex; align-items: center; font: 17px "Open Sans", sans-serif; }
.weather { margin-left: 31px; }
.temp { margin-left: 11px; width: 68px; letter-spacing: -0.600px; }
.cam { margin-left: 14px; }
.battery { margin-left: 11px; }
.wifi { margin-left: 12px; }
.volume { margin-left: 11px; }
.clock { width: 84px; margin-left: 7px; display: flex; flex-direction: column; align-items: center; font-size: 15px; line-height: 23px; letter-spacing: -0.500px; white-space: nowrap; }
.notify { position: relative; margin-left: 19px; }
.badge { position: absolute; left: 9px; top: 9px; width: 21px; height: 21px; border: 1px solid #888; border-radius: 50%; background: #2b2e33; font-size: 14px; line-height: 19px; text-align: center; }
.show-desktop { margin-left: auto; width: 6px; height: 50px; border-left: 1px solid #7d8798; }
```
